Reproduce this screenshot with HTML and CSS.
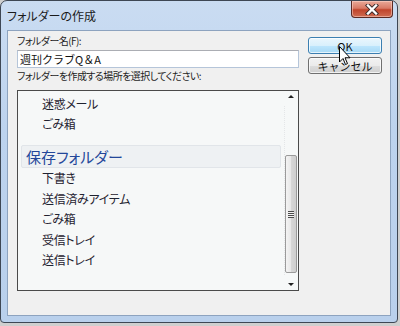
FILE: index.html
```html
<!DOCTYPE html>
<html lang="ja">
<head>
    <meta charset="UTF-8">
    <title>フォルダーの作成</title>
    <link rel="stylesheet" href="styles.css">
</head>
<body>

    <div class="window">
        <div class="titlebar">
            <span class="title">フォルダーの作成</span>
            <button class="close" aria-label="閉じる">
                <svg width="16" height="11" viewBox="0 0 16 11">
                    <path d="M4 1.5 L12 9.5 M12 1.5 L4 9.5" stroke="#3a2a2a" stroke-width="4.2" stroke-linecap="square"/>
                    <path d="M4 1.5 L12 9.5 M12 1.5 L4 9.5" stroke="#fff" stroke-width="2.4" stroke-linecap="square"/>
                </svg>
            </button>
        </div>

        <div class="client">
            <div class="main">
                <label class="label" for="folderName">フォルダー名(F):</label>
                <input class="name-input" id="folderName" type="text" value="週刊クラブQ＆A">
                <div class="label spaced">フォルダーを作成する場所を選択してください:</div>

                <div class="listbox">
                    <div class="items">
                        <div class="item">迷惑メール</div>
                        <div class="item">ごみ箱</div>
                        <div class="group">保存フォルダー</div>
                        <div class="item">下書き</div>
                        <div class="item">送信済みアイテム</div>
                        <div class="item">ごみ箱</div>
                        <div class="item">受信トレイ</div>
                        <div class="item">送信トレイ</div>
                    </div>
                    <div class="scrollbar">
                        <div class="arrow up"></div>
                        <div class="track">
                            <div class="thumb"><span class="grip"></span></div>
                        </div>
                        <div class="arrow down"></div>
                    </div>
                </div>
            </div>

            <div class="buttons">
                <button class="btn btn-hot">OK</button>
                <button class="btn">キャンセル</button>
            </div>

            <!-- mouse pointer over the OK button -->
            <svg class="cursor" width="12" height="20" viewBox="0 0 12 20">
                <path d="M0.5 0.5 L0.5 16 L4 12.5 L6.5 18.5 L8.5 17.6 L6 11.8 L11 11.8 Z" fill="#fff" stroke="#000" stroke-width="1"/>
            </svg>
        </div>
    </div>

</body>
</html>
```

FILE: styles.css
```css
body {
    margin: 0;
    background-color: #cfcfcf;
    font-family: "Noto Sans CJK JP", "Noto Sans", sans-serif;
    font-feature-settings: "palt";
}
.window {
    width: 398px;
    box-sizing: border-box;
    border: 1px solid #3e4754;
    border-radius: 7px 7px 4px 4px;
    background: linear-gradient(to bottom, #cadcf2 0%, #bdd3ee 40%, #b9d0ec 100%);
    padding: 0 6px 6px;
}
.titlebar {
    height: 29px;
    display: flex;
    align-items: flex-start;
    justify-content: space-between;
}
.title {
    font-size: 12px;
    line-height: 14px;
    color: #1a1a1a;
    margin-top: 8px;
}
.close {
    width: 42px;
    height: 17px;
    margin-right: -2px;
    padding: 0;
    border: 1px solid #5a2a24;
    border-top: none;
    border-radius: 0 0 4px 4px;
    background: linear-gradient(to bottom, #e9a999 0%, #d87a66 45%, #c0452c 55%, #cf6c52 100%);
    box-shadow: inset 0 0 0 1px rgba(255, 220, 210, 0.5);
    display: flex;
    align-items: center;
    justify-content: center;
}
.client {
    position: relative;
    height: 286px;
    box-sizing: border-box;
    border: 1px solid #8da3bf;
    background-color: #f0f0f0;
    display: grid;
    grid-template-columns: 282px 74px;
    column-gap: 9px;
    align-items: start;
    padding: 3px 0 0 9px;
}
.label {
    display: block;
    font-size: 10px;
    line-height: 14px;
    letter-spacing: -0.55px;
    color: #1e1e1e;
}
.label.spaced {
    margin-top: 1px;
}
.name-input {
    display: block;
    width: 100%;
    height: 18px;
    box-sizing: border-box;
    margin: 2px 0 0;
    padding: 0 2px;
    border: 1px solid #b5c5d9;
    border-top-color: #abadb3;
    background-color: #fff;
    font-family: inherit;
    font-size: 11px;
    color: #111;
    outline: none;
}
.listbox {
    margin-top: 7px;
    height: 201px;
    box-sizing: border-box;
    border: 1px solid #4a4a4a;
    background-color: #f6f8f8;
    display: flex;
}
.items {
    flex: 1;
    padding-top: 2.5px;
    overflow: hidden;
}
.item {
    height: 20.5px;
    line-height: 20.5px;
    padding-left: 24px;
    font-size: 12px;
    letter-spacing: -0.3px;
    color: #1f2230;
}
.group {
    margin: 10.5px 3px 0;
    height: 23px;
    box-sizing: border-box;
    border: 1px solid #e1e5e9;
    border-radius: 2px;
    background-color: #eef1f3;
    padding-left: 4px;
    line-height: 21px;
    font-size: 15px;
    color: #23479a;
}
.scrollbar {
    width: 13px;
    margin-right: 1px;
    display: flex;
    flex-direction: column;
}
.arrow {
    height: 15px;
    display: flex;
    align-items: center;
    justify-content: center;
}
.arrow::before {
    content: "";
    border-left: 3px solid transparent;
    border-right: 3px solid transparent;
}
.arrow.up::before {
    border-bottom: 3px solid #202020;
    margin-top: -5px;
}
.arrow.down::before {
    border-top: 3px solid #202020;
    margin-top: 3px;
}
.track {
    flex: 1;
    display: flex;
    flex-direction: column;
    justify-content: flex-end;
    padding-bottom: 2px;
    border-left: 1px dotted #e4e6e8;
}
.thumb {
    height: 118px;
    box-sizing: border-box;
    border: 1px solid #9a9a9a;
    border-radius: 2px;
    background: linear-gradient(to right, #f4f4f4 0%, #e8e8e8 45%, #d6d6d6 55%, #cfcfcf 100%);
    display: flex;
    align-items: center;
    justify-content: center;
}
.grip {
    width: 6px;
    height: 7px;
    background: repeating-linear-gradient(to bottom, #4a4a4a 0, #4a4a4a 1px, #f2f2f2 1px, #f2f2f2 2px);
}
.buttons {
    margin-top: 3px;
    display: flex;
    flex-direction: column;
    gap: 3px;
}
.btn {
    height: 17px;
    padding: 0;
    box-sizing: border-box;
    border: 1px solid #707070;
    border-radius: 3px;
    background: linear-gradient(to bottom, #f2f2f2 0%, #ebebeb 50%, #dddddd 51%, #cfcfcf 100%);
    box-shadow: inset 0 0 0 1px rgba(255, 255, 255, 0.7);
    font-family: inherit;
    font-size: 11px;
    line-height: 14px;
    color: #111;
}
.btn-hot {
    border-color: #3c7fb1;
    background: linear-gradient(to bottom, #eaf6fd 0%, #d9f0fc 50%, #bee6fd 51%, #a7d9f5 100%);
}
.cursor {
    position: absolute;
    left: 331px;
    top: 15px;
}
```
